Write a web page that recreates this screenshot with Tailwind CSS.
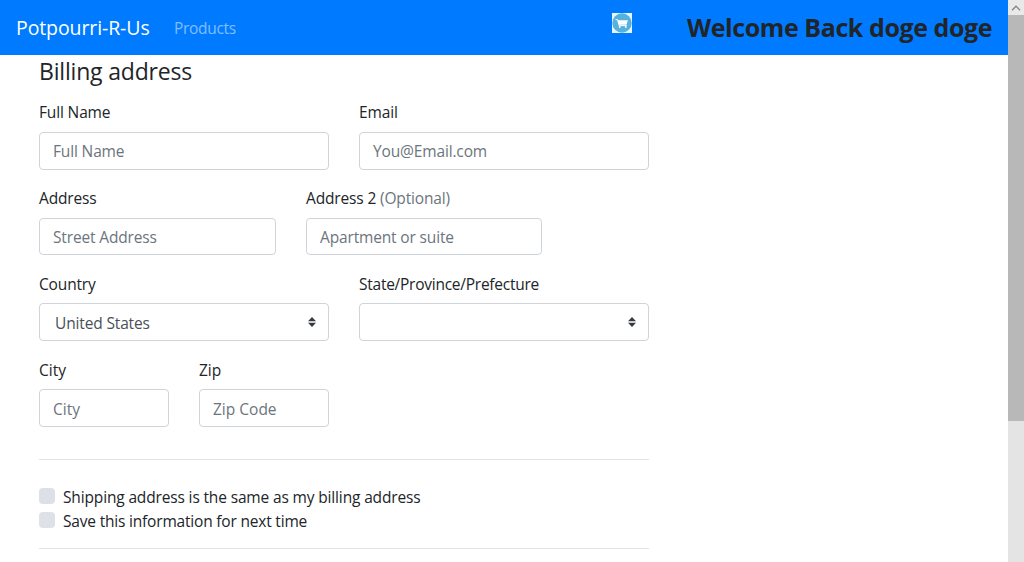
<!DOCTYPE html>
<html lang="en">
<head>
<meta charset="utf-8">
<title>Potpourri-R-Us</title>
<script src="https://cdn.jsdelivr.net/npm/@tailwindcss/browser@4"></script>
</head>
<body class="flex h-[562px] w-[1024px] overflow-hidden bg-white font-['Open_Sans','Noto_Sans',sans-serif] text-[15.5px] leading-6 tracking-[-0.15px] text-[#212529]">
<div class="flex h-full w-[1008px] flex-col">
  <nav class="flex h-[55px] shrink-0 items-center bg-[#007bff] pl-4">
    <a class="w-[134px] whitespace-nowrap text-[19.5px] leading-[30px] tracking-[-0.1px] text-white">Potpourri-R-Us</a>
    <a class="ml-6 whitespace-nowrap pt-px tracking-[-0.3px] text-white/50">Products</a>
    <div class="ml-auto flex items-center">
      <svg class="mb-[9px] h-5 w-5" viewBox="0 0 20 20">
        <rect width="20" height="20" fill="#e4f6f6"/>
        <circle cx="10" cy="10" r="9.7" fill="#55b2de"/>
        <path d="M3.6 6.6H5.6L7.2 12.6h7.6" fill="none" stroke="#fff" stroke-width="1"/>
        <path d="M5.4 7.2h10.4l-1.2 4.6H6.8z" fill="#fff"/>
        <circle cx="7.8" cy="14" r=".9" fill="#fff"/><circle cx="13.8" cy="14" r=".9" fill="#fff"/>
      </svg>
      <h1 class="mr-4 mb-px ml-[55px] w-[305px] whitespace-nowrap text-[25px] leading-[37px] font-bold tracking-[-0.42px]">Welcome Back doge doge</h1>
    </div>
  </nav>
  <main class="ml-[39px] flex w-[610px] flex-col">
    <h4 class="h-[45px] whitespace-nowrap text-[23px] leading-[32px] tracking-[-0.18px]">Billing address</h4>
    <div class="grid h-[86px] grid-cols-2 gap-x-[30px]">
      <label>Full Name<input class="mt-2 block h-[38px] w-full rounded border border-[#ced4da] px-[13px] placeholder:text-[#6c757d]" placeholder="Full Name"></label>
      <label>Email<input class="mt-2 block h-[38px] w-full rounded border border-[#ced4da] px-[13px] placeholder:text-[#6c757d]" placeholder="You@Email.com"></label>
    </div>
    <div class="flex h-[86px] gap-x-[30px]">
      <label class="w-[237px]">Address<input class="mt-2 block h-[37px] w-full rounded border border-[#ced4da] px-[13px] placeholder:text-[#6c757d]" placeholder="Street Address"></label>
      <label class="w-[236px]">Address 2 <span class="text-[#6c757d]">(Optional)</span><input class="mt-2 block h-[37px] w-full rounded border border-[#ced4da] px-[13px] placeholder:text-[#6c757d]" placeholder="Apartment or suite"></label>
    </div>
    <div class="grid h-[86px] grid-cols-2 gap-x-[30px]">
      <div>
        <div>Country</div>
        <div class="mt-[7px] flex h-[38px] items-center justify-between rounded border border-[#ced4da] pr-3 pl-[15px] text-[#495057]">
          <span class="pt-0.5">United States</span>
          <svg class="h-[10px] w-2" viewBox="0 0 8 10"><path d="M4 0L0 4.2h8zM0 5.8h8L4 10z" fill="#343a40"/></svg>
        </div>
      </div>
      <div>
        <div class="tracking-[-0.25px]">State/Province/Prefecture</div>
        <div class="mt-[7px] flex h-[38px] items-center justify-end rounded border border-[#ced4da] pr-3">
          <svg class="h-[10px] w-2" viewBox="0 0 8 10"><path d="M4 0L0 4.2h8zM0 5.8h8L4 10z" fill="#343a40"/></svg>
        </div>
      </div>
    </div>
    <div class="flex h-[101px] gap-x-[30px] tracking-normal">
      <label class="w-[130px]">City<input class="mt-[7px] block h-[38px] w-full rounded border border-[#ced4da] px-[13px] pt-0.5 tracking-normal placeholder:text-[#6c757d]" placeholder="City"></label>
      <label class="w-[130px]">Zip<input class="mt-[7px] block h-[38px] w-full rounded border border-[#ced4da] px-[13px] pt-0.5 tracking-normal placeholder:text-[#6c757d]" placeholder="Zip Code"></label>
    </div>
    <div class="border-t border-[#e4e4e5] pt-[25px]">
      <div class="flex gap-2"><span class="mt-[3px] h-4 w-4 rounded bg-[#dee0e7]"></span><span>Shipping address is the same as my billing address</span></div>
      <div class="flex gap-2"><span class="mt-[3px] h-4 w-4 rounded bg-[#dee2e8]"></span><span class="tracking-[-0.19px]">Save this information for next time</span></div>
    </div>
    <div class="mt-[15px] border-t border-[#e4e4e5]"></div>
  </main>
</div>
<div class="flex w-4 flex-col bg-[#e4e4e4]">
  <div class="flex h-[15px] items-center justify-center bg-[#e9e9e9]">
    <svg class="h-[6px] w-[10px]" viewBox="0 0 10 6"><path d="M1 5.2L5 1.2l4 4" fill="none" stroke="#858585" stroke-width="1.3"/></svg>
  </div>
  <div class="h-[406px] bg-[#b8b8b8]"></div>
</div>
</body>
</html>
